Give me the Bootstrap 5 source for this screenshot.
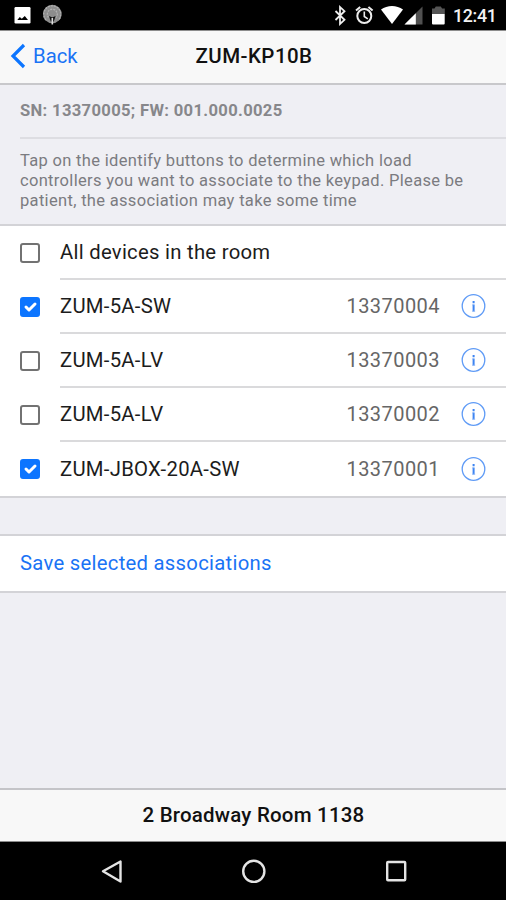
<!DOCTYPE html>
<html lang="en">
<head>
<meta charset="utf-8">
<meta name="viewport" content="width=device-width, initial-scale=1">
<title>ZUM-KP10B</title>
<link href="https://cdn.jsdelivr.net/npm/bootstrap@5.3.0/dist/css/bootstrap.min.css" rel="stylesheet">
<style>
body{font-family:Roboto,sans-serif;font-size:20.3px;line-height:24px;letter-spacing:.27px;background:#efeff4;color:#1c1c1c}
svg{display:block;flex:none}
.screen{height:900px;overflow:hidden}
.status-bar{height:30px;background:#000}
.clock{width:55px;padding:1px 0 0 2px;font-size:17.8px;font-weight:500;letter-spacing:-.3px;color:#f2f2f2}
.title-bar{height:55px;padding:0 0 2px 2px;background:#f8f8f8;border-top:1px solid #8d8d8d;border-bottom:2px solid #c8c8cb;grid-template-columns:1fr auto 1fr}
.ios-blue{color:#1a73f5}
.back-link{padding-left:8px;gap:7px;letter-spacing:0}
.heading{font-size:20.5px;font-weight:500;color:#111;letter-spacing:.45px}
.serial{height:54px;margin-left:20px;border-bottom:2px solid #dddde2;font-size:16.6px;font-weight:700;color:#87878b;letter-spacing:.33px}
.hint{height:85px;padding:12px 20px 0;font-size:16.5px;line-height:20px;color:#7b7b80;letter-spacing:.32px}
.group{background:#fff;border-top:2px solid #d3d3d7;border-bottom:2px solid #d3d3d7}
.device{padding-left:20px;height:54px}
.device-body{margin-left:20px;height:54px;padding-right:20px;border-bottom:2px solid #dadadc}
.device:last-child .device-body{border-bottom:0;padding-bottom:1px}
.device .form-check-input{width:20px;height:20px;margin:0;border:2px solid #727272;border-radius:3px;background-color:#fff}
.device .form-check-input:checked{background-color:#0c75ff;border-color:#0c75ff;background-size:20px}
.number{font-size:20px;color:#666;letter-spacing:.45px;margin-right:21px}
.save-group{height:59px;margin-top:36px;padding:0 20px 2px}
.room-bar{height:54px;padding:0 0 2px 1px;background:#f8f8f8;border-top:2px solid #c4c4c8;border-bottom:1px solid #8b8b8b;letter-spacing:.2px}
.android-nav{height:58px;background:#000}
</style>
</head>
<body>
<div class="screen d-flex flex-column">
  <header class="status-bar d-flex align-items-center justify-content-between flex-shrink-0">
    <svg width="70" height="30" viewBox="0 0 70 30">
      <rect x="14.500" y="7" width="16" height="16.500" rx="1.200" fill="#fff"/>
      <path d="M17.300 20l2.500-3 2 1.800 3-2.800 3.200 4z" fill="#000"/>
      <circle cx="52.300" cy="14" r="9.300" fill="#8d8d8d"/>
      <path d="M46 20a8.500 8.500 0 1 1 12.600 0M48.500 17.500a5 5 0 1 1 7.600 0" fill="none" stroke="#b0b0b0" stroke-width="1.300" stroke-dasharray="2 1"/>
      <path d="M49 16l3.300 1.500 3.300-1.500-1.800 5.500h-3z" fill="#111"/>
      <path d="M52.300 18v6.500" stroke="#ddd" stroke-width="1.600"/>
    </svg>
    <div class="d-flex align-items-center">
      <svg width="121" height="30" viewBox="330 0 121 30">
        <path d="M335.500 11l9 8.800-4.500 4.200V7l4.500 4.200-9 8.800" fill="none" stroke="#eee" stroke-width="1.800"/>
        <g fill="none" stroke="#eee" stroke-width="2"><circle cx="364.300" cy="16" r="7"/><path d="M364.300 11.500v5l3.500 2.300" stroke-width="1.600"/><path d="M356 10.500l4.200-3.600M372.600 10.500l-4.200-3.600"/></g>
        <path d="M381 9.600c6.300-4.900 15.700-4.900 22 0L392 24z" fill="#fff"/>
        <path d="M422.500 6.500v18h-18z" fill="#505050"/>
        <path d="M415.800 13.200v11.300h-11.300z" fill="#fff"/>
        <path d="M432 8.500h2.500l1.300-2h5l1.300 2h2.700v5.500H432z" fill="#555"/>
        <path d="M432 14h12.700v9.500a1 1 0 0 1-1 1H433a1 1 0 0 1-1-1z" fill="#fff"/>
      </svg>
      <span class="clock">12:41</span>
    </div>
  </header>

  <nav class="title-bar d-grid align-items-center flex-shrink-0">
    <a href="#" class="back-link ios-blue d-flex align-items-center text-decoration-none">
      <svg width="16" height="26" viewBox="0 0 16 26"><path d="M14 2L3 13l11 11" fill="none" stroke="#0c75ff" stroke-width="3.200"/></svg>
      <span>Back</span>
    </a>
    <span class="heading">ZUM-KP10B</span>
  </nav>

  <main class="flex-grow-1">
    <div class="serial d-flex align-items-center">SN: 13370005; FW: 001.000.0025</div>
    <div class="hint">Tap on the identify buttons to determine which load<br>controllers you want to associate to the keypad. Please be<br>patient, the association may take some time</div>

    <div class="group">
      <label class="device d-flex align-items-center">
        <input class="form-check-input flex-shrink-0" type="checkbox">
        <span class="device-body d-flex align-items-center flex-grow-1"><span>All devices in the room</span></span>
      </label>
      <label class="device d-flex align-items-center">
        <input class="form-check-input flex-shrink-0" type="checkbox" checked>
        <span class="device-body d-flex align-items-center flex-grow-1"><span>ZUM-5A-SW</span><span class="number ms-auto">13370004</span>
          <svg width="25" height="26"><use href="#info"/></svg></span>
      </label>
      <label class="device d-flex align-items-center">
        <input class="form-check-input flex-shrink-0" type="checkbox">
        <span class="device-body d-flex align-items-center flex-grow-1"><span>ZUM-5A-LV</span><span class="number ms-auto">13370003</span>
          <svg width="25" height="26"><use href="#info"/></svg></span>
      </label>
      <label class="device d-flex align-items-center">
        <input class="form-check-input flex-shrink-0" type="checkbox">
        <span class="device-body d-flex align-items-center flex-grow-1"><span>ZUM-5A-LV</span><span class="number ms-auto">13370002</span>
          <svg width="25" height="26"><use href="#info"/></svg></span>
      </label>
      <label class="device d-flex align-items-center">
        <input class="form-check-input flex-shrink-0" type="checkbox" checked>
        <span class="device-body d-flex align-items-center flex-grow-1"><span>ZUM-JBOX-20A-SW</span><span class="number ms-auto">13370001</span>
          <svg width="25" height="26"><use href="#info"/></svg></span>
      </label>
    </div>

    <div class="group save-group d-flex align-items-center"><a href="#" class="ios-blue text-decoration-none">Save selected associations</a></div>
  </main>

  <div class="room-bar heading d-flex align-items-center justify-content-center flex-shrink-0">2 Broadway Room 1138</div>
  <footer class="android-nav flex-shrink-0">
    <svg width="506" height="58" viewBox="0 842 506 58" fill="none" stroke="#e4e4e4" stroke-width="2.400">
      <path d="M120.500 861.500v20L103 871.300z" stroke-linejoin="round"/>
      <circle cx="253.800" cy="871.300" r="10.600"/>
      <rect x="387.200" y="862" width="18" height="18.300" rx=".8"/>
    </svg>
  </footer>
</div>
<svg width="0" height="0" class="position-absolute">
  <symbol id="info" viewBox="0 0 25 26"><circle cx="12.500" cy="13" r="11.300" fill="none" stroke="#5f9bf6" stroke-width="1.300"/><path d="M12.600 11.500v7M12.600 8v2.200" stroke="#3d84f2" stroke-width="2"/><path d="M11 12h1.500M11 18.200h3.200" stroke="#8db7f7" stroke-width=".8"/></symbol>
</svg>
<script src="https://cdn.jsdelivr.net/npm/bootstrap@5.3.0/dist/js/bootstrap.bundle.min.js"></script>
</body>
</html>
